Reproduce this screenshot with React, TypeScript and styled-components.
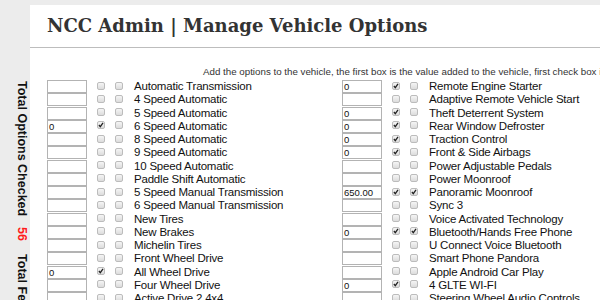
import React from 'react';
import styled, { createGlobalStyle } from 'styled-components';

const GlobalStyle = createGlobalStyle`
  html, body {
    margin: 0;
    padding: 0;
    background: #ececec;
    overflow: hidden;
  }
  body {
    font-family: "Liberation Sans", Arial, sans-serif;
  }
`;

const StyledPage = styled.div`
  display: flex;
  width: 600px;
  height: 300px;
  overflow: hidden;
`;

const StyledSidebar = styled.aside`
  flex: none;
  width: 30px;
  box-sizing: border-box;
  padding: 81px 0 0 15px;
`;

const StyledVerticalText = styled.div`
  writing-mode: vertical-rl;
  font-size: 12.5px;
  line-height: 12.5px;
  font-weight: bold;
  color: #111;
  white-space: nowrap;
`;

const StyledCount = styled.span`
  color: #ff1a1a;
  margin-top: 11px;
  margin-bottom: 13px;
`;

const StyledPanel = styled.main`
  flex: 1;
  min-width: 0;
  margin-top: 5px;
  background: #ffffff;
  overflow: hidden;
`;

const StyledHeader = styled.header`
  height: 43px;
  box-sizing: border-box;
  padding: 9px 0 0 17px;
  border-bottom: 1px solid #bdbdbd;
`;

const StyledTitle = styled.h1`
  margin: 0;
  font-family: "DejaVu Serif", "Liberation Serif", serif;
  font-size: 18px;
  line-height: 24px;
  font-weight: bold;
  color: #333;
  white-space: nowrap;
`;

const StyledIntro = styled.p`
  margin: 0;
  padding: 18px 0 0 173px;
  font-size: 9.75px;
  line-height: 12px;
  color: #333;
  white-space: nowrap;
`;

const StyledOptionsGrid = styled.div`
  display: grid;
  grid-template-columns: 295px 295px;
  padding: 2px 0 0 17px;
`;

const StyledColumn = styled.div`
  display: flex;
  flex-direction: column;
`;

const StyledRow = styled.div`
  display: flex;
  align-items: center;
  gap: 10px;
  height: 13.25px;
`;

const StyledValueBox = styled.div`
  flex: none;
  width: 40px;
  height: 13px;
  box-sizing: border-box;
  border: 1px solid #b3b3b3;
  padding: 0 1px;
  font-size: 9.5px;
  line-height: 11px;
  color: #111;
`;

const StyledCheck = styled.span`
  flex: none;
  position: relative;
  width: 8px;
  height: 8px;
  box-sizing: border-box;
  margin-top: -2px;
  border: 1px solid #bcbcbc;
  border-radius: 2px;
  background: linear-gradient(#f5f5f5, #dcdcdc);
  svg {
    position: absolute;
    left: 0;
    top: 0;
  }
`;

const StyledLabel = styled.span`
  padding-left: 1px;
  font-size: 11.5px;
  letter-spacing: -0.2px;
  line-height: 13px;
  color: #111;
  white-space: nowrap;
`;

type Option = {
  label: string;
  value?: string;
  first?: boolean;
  second?: boolean;
};

const leftOptions: Option[] = [
  { label: 'Automatic Transmission' },
  { label: '4 Speed Automatic' },
  { label: '5 Speed Automatic' },
  { label: '6 Speed Automatic', value: '0', first: true },
  { label: '8 Speed Automatic' },
  { label: '9 Speed Automatic' },
  { label: '10 Speed Automatic' },
  { label: 'Paddle Shift Automatic' },
  { label: '5 Speed Manual Transmission' },
  { label: '6 Speed Manual Transmission' },
  { label: 'New Tires' },
  { label: 'New Brakes' },
  { label: 'Michelin Tires' },
  { label: 'Front Wheel Drive' },
  { label: 'All Wheel Drive', value: '0', first: true },
  { label: 'Four Wheel Drive' },
  { label: 'Active Drive 2 4x4' },
];

const rightOptions: Option[] = [
  { label: 'Remote Engine Starter', value: '0', first: true },
  { label: 'Adaptive Remote Vehicle Start' },
  { label: 'Theft Deterrent System', value: '0', first: true },
  { label: 'Rear Window Defroster', value: '0', first: true },
  { label: 'Traction Control', value: '0', first: true },
  { label: 'Front & Side Airbags', value: '0', first: true },
  { label: 'Power Adjustable Pedals' },
  { label: 'Power Moonroof' },
  { label: 'Panoramic Moonroof', value: '650.00', first: true, second: true },
  { label: 'Sync 3' },
  { label: 'Voice Activated Technology' },
  { label: 'Bluetooth/Hands Free Phone', value: '0', first: true, second: true },
  { label: 'U Connect Voice Bluetooth' },
  { label: 'Smart Phone Pandora' },
  { label: 'Apple Android Car Play' },
  { label: '4 GLTE WI-FI', value: '0', first: true },
  { label: 'Steering Wheel Audio Controls' },
];

const Check: React.FunctionComponent<{ checked?: boolean }> = ({ checked }) => (
  <StyledCheck>
    {checked && (
      <svg width="6" height="6" viewBox="0 0 6 6">
        <path d="M0.9 3 L2.3 4.6 L5 0.9" fill="none" stroke="#222" strokeWidth="1.3" />
      </svg>
    )}
  </StyledCheck>
);

const OptionRow: React.FunctionComponent<{ option: Option }> = ({ option }) => (
  <StyledRow>
    <StyledValueBox>{option.value}</StyledValueBox>
    <Check checked={option.first} />
    <Check checked={option.second} />
    <StyledLabel>{option.label}</StyledLabel>
  </StyledRow>
);

const App: React.FunctionComponent = () => (
  <>
    <GlobalStyle />
    <StyledPage>
      <StyledSidebar>
        <StyledVerticalText>
          Total Options Checked<StyledCount>56</StyledCount>Total Features
        </StyledVerticalText>
      </StyledSidebar>
      <StyledPanel>
        <StyledHeader>
          <StyledTitle>NCC Admin | Manage Vehicle Options</StyledTitle>
        </StyledHeader>
        <StyledIntro>
          Add the options to the vehicle, the first box is the value added to the vehicle, first check box
          is to show the option
        </StyledIntro>
        <StyledOptionsGrid>
          <StyledColumn>
            {leftOptions.map((option) => (
              <OptionRow key={option.label} option={option} />
            ))}
          </StyledColumn>
          <StyledColumn>
            {rightOptions.map((option) => (
              <OptionRow key={option.label} option={option} />
            ))}
          </StyledColumn>
        </StyledOptionsGrid>
      </StyledPanel>
    </StyledPage>
  </>
);

export default App;
